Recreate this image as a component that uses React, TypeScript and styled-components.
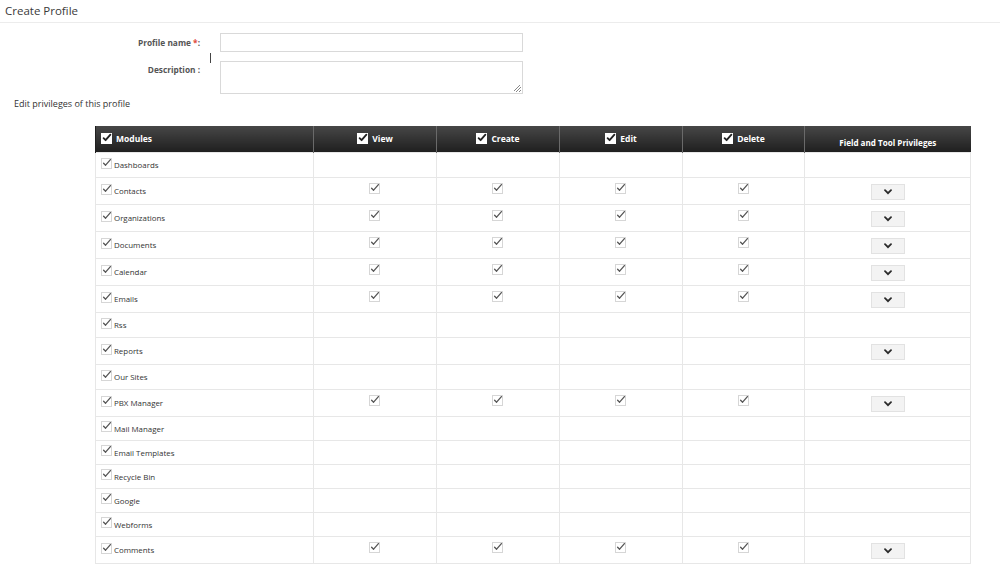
import React from 'react'
import styled, { createGlobalStyle } from 'styled-components'

const GlobalStyle = createGlobalStyle`
  html, body {
    margin: 0;
    padding: 0;
    background: #fff;
    font-family: 'Open Sans', 'Noto Sans', Arial, sans-serif;
    color: #333;
  }
`

type Module = { name: string; perms: boolean; tools: boolean }

const modules: Module[] = [
  { name: 'Dashboards', perms: false, tools: false },
  { name: 'Contacts', perms: true, tools: true },
  { name: 'Organizations', perms: true, tools: true },
  { name: 'Documents', perms: true, tools: true },
  { name: 'Calendar', perms: true, tools: true },
  { name: 'Emails', perms: true, tools: true },
  { name: 'Rss', perms: false, tools: false },
  { name: 'Reports', perms: false, tools: true },
  { name: 'Our Sites', perms: false, tools: false },
  { name: 'PBX Manager', perms: true, tools: true },
  { name: 'Mail Manager', perms: false, tools: false },
  { name: 'Email Templates', perms: false, tools: false },
  { name: 'Recycle Bin', perms: false, tools: false },
  { name: 'Google', perms: false, tools: false },
  { name: 'Webforms', perms: false, tools: false },
  { name: 'Comments', perms: true, tools: true }
]

const Check = ({ header }: { header?: boolean }) => (
  <CheckBox $header={header} width="12" height="12" viewBox="0 0 12 12">
    <rect x="0.5" y="1.5" width="10" height="10" fill="#fff" stroke={header ? '#fff' : '#d6d6d6'} />
    <path
      d="M2.6 6.2 L4.6 8.2 L9.4 2.6"
      fill="none"
      stroke={header ? '#222' : '#555'}
      strokeWidth={header ? 1.8 : 1.3}
      strokeLinecap="round"
      strokeLinejoin="round"
    />
  </CheckBox>
)

const Chevron = () => (
  <svg width="8" height="6" viewBox="0 0 8 6">
    <path d="M1 1.2 L4 4.2 L7 1.2" fill="none" stroke="#2b2b2b" strokeWidth="1.8" strokeLinecap="round" />
  </svg>
)

const App = () => {
  const permCols = ['View', 'Create', 'Edit', 'Delete']
  return (
    <>
      <GlobalStyle />
      <Page>
        <TitleBar>Create Profile</TitleBar>
        <Form>
          <Label>
            Profile name <Required>*</Required>:
          </Label>
          <TextInput />
          <Label $top>Description :</Label>
          <TextArea />
          <Caret />
        </Form>
        <SubHeading>Edit privileges of this profile</SubHeading>
        <Table>
          <colgroup>
            <col style={{ width: 218 }} />
            <col style={{ width: 123 }} />
            <col style={{ width: 123 }} />
            <col style={{ width: 123 }} />
            <col style={{ width: 122 }} />
            <col style={{ width: 166 }} />
          </colgroup>
          <thead>
            <tr>
              <Th $left>
                <HeadInner $left>
                  <Check header />
                  Modules
                </HeadInner>
              </Th>
              {permCols.map(c => (
                <Th key={c}>
                  <HeadInner>
                    <Check header />
                    {c}
                  </HeadInner>
                </Th>
              ))}
              <Th>
                <ToolsHead>Field and Tool Privileges</ToolsHead>
              </Th>
            </tr>
          </thead>
          <tbody>
            {modules.map((m, i) => (
              <Row key={m.name} $tall={m.tools} $early={i < 9}>
                <Td $left>
                  <ModuleCell>
                    <Check />
                    {m.name}
                  </ModuleCell>
                </Td>
                {permCols.map(c => (
                  <Td key={c}>{m.perms && <Check />}</Td>
                ))}
                <Td>
                  {m.tools && (
                    <ToolButton>
                      <Chevron />
                    </ToolButton>
                  )}
                </Td>
              </Row>
            ))}
          </tbody>
        </Table>
      </Page>
    </>
  )
}

const Page = styled.div`
  width: 1000px;
  min-height: 575px;
`

const TitleBar = styled.div`
  height: 22px;
  padding-left: 5px;
  font-size: 11.5px;
  line-height: 21px;
  color: #3a3a3a;
  border-bottom: 1px solid #ececec;
`

const Form = styled.div`
  position: relative;
  display: grid;
  grid-template-columns: 200px 303px;
  column-gap: 20px;
  row-gap: 9px;
  padding-top: 10px;
`

const Label = styled.div<{ $top?: boolean }>`
  text-align: right;
  font-size: 8.3px;
  font-weight: 700;
  color: #555;
  line-height: 18px;
  align-self: ${({ $top }) => ($top ? 'start' : 'center')};
`

const Required = styled.span`
  color: #e04a3f;
`

const TextInput = styled.div`
  height: 19px;
  box-sizing: border-box;
  border: 1px solid #d9d9d9;
  background: #fff;
`

const TextArea = styled.div`
  position: relative;
  height: 33px;
  box-sizing: border-box;
  border: 1px solid #d9d9d9;
  background: #fff;
  &::after {
    content: '';
    position: absolute;
    right: 1px;
    bottom: 1px;
    width: 7px;
    height: 7px;
    background: linear-gradient(
      135deg,
      transparent 0 40%,
      #888 40% 48%,
      transparent 48% 60%,
      #888 60% 68%,
      transparent 68% 80%,
      #888 80% 88%,
      transparent 88%
    );
  }
`

const Caret = styled.span`
  position: absolute;
  left: 210px;
  top: 30px;
  width: 1px;
  height: 10px;
  background: #444;
`

const SubHeading = styled.div`
  padding: 4px 0 0 14px;
  font-size: 9px;
  line-height: 12px;
  color: #333;
`

const Table = styled.table`
  margin: 16px 0 0 95px;
  width: 875px;
  table-layout: fixed;
  border-collapse: collapse;
  font-size: 7.9px;
`

const Th = styled.th<{ $left?: boolean }>`
  height: 26px;
  padding: 0 0 0 ${({ $left }) => ($left ? '5px' : '0')};
  background: linear-gradient(#474747, #1f1f1f);
  color: #fff;
  font-size: 8.5px;
  font-weight: 700;
  border-left: 1px solid #6a6a6a;
  vertical-align: middle;
  &:first-child {
    border-left: 1px solid #1f1f1f;
  }
`

const HeadInner = styled.div<{ $left?: boolean }>`
  display: flex;
  align-items: center;
  justify-content: ${({ $left }) => ($left ? 'flex-start' : 'center')};
  gap: 3px;
  margin-top: -2px;
`

const ToolsHead = styled.div`
  text-align: center;
  font-size: 8.1px;
  margin-top: 6px;
`

const CheckBox = styled.svg<{ $header?: boolean }>`
  flex: none;
  display: block;
  margin: ${({ $header }) => ($header ? '0' : '0 auto 7px')};
`

const Row = styled.tr<{ $tall?: boolean; $early?: boolean }>`
  height: ${({ $tall, $early }) => ($tall ? '27px' : $early ? '25px' : '24px')};
`

const Td = styled.td<{ $left?: boolean }>`
  padding: 0 ${({ $left }) => ($left ? '5px' : '0')};
  border: 1px solid #e7e7e7;
  text-align: center;
  vertical-align: middle;
  color: #333;
`

const ModuleCell = styled.div`
  display: flex;
  align-items: center;
  & > svg {
    margin: 0 1px 5px 0;
  }
`

const ToolButton = styled.div`
  display: inline-flex;
  align-items: center;
  justify-content: center;
  width: 34px;
  height: 16px;
  margin-top: 1px;
  box-sizing: border-box;
  border: 1px solid #e2e2e2;
  background: #f3f3f3;
  vertical-align: middle;
`

export default App
